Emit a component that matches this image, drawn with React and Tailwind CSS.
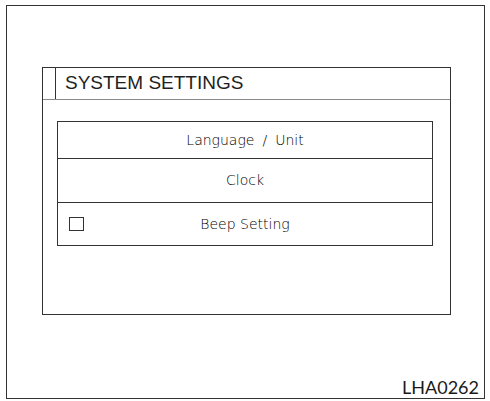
export default function App() {
  const rows = [
    { key: 'lang', h: 'h-[36px]', check: false },
    { key: 'Clock', h: 'h-[44px]', check: false },
    { key: 'Beep Setting', h: 'h-[43px]', check: true },
  ];

  return (
    <div className="w-[490px] h-[401px] bg-white pl-[6px] pt-[5px]">
      <div className="w-[479px] h-[394px] border border-[#333] flex flex-col">
        <div className="ml-[35px] mt-[61px] w-[409px] h-[248px] border border-[#333] flex flex-col">
          <div className="flex h-[32px] border-b border-[#8a8a8a]">
            <div className="w-[13px] border-r border-[#333]" />
            <div
              className="pl-[9px] flex items-center text-[19px] text-[#1f1f1f]"
              style={{ fontFamily: '"Liberation Sans", Arial, sans-serif' }}
            >
              SYSTEM SETTINGS
            </div>
          </div>

          <div
            className="ml-[14px] mt-[21px] w-[376px] border border-[#333] flex flex-col text-[14px] font-extralight text-black"
            style={{ fontFamily: '"DejaVu Sans", sans-serif' }}
          >
            {rows.map((r, i) => (
              <div
                key={r.key}
                className={`${r.h} grid grid-cols-[1fr_auto_1fr] items-center ${i > 0 ? 'border-t border-[#333]' : ''}`}
              >
                <div className="pl-[11px]">
                  {r.check && <div className="w-[15px] h-[14px] border border-[#333]" />}
                </div>
                {r.key === 'lang' ? (
                  <div className="whitespace-pre">
                    Language<span className="mx-[8px]">/</span>Unit
                  </div>
                ) : (
                  <div className="whitespace-pre">{r.key}</div>
                )}
                <div />
              </div>
            ))}
          </div>
        </div>

        <div className="flex-1 flex items-end justify-end pr-[5px]">
          <span
            className="text-[18px] leading-[22px] text-[#1a1a1a]"
            style={{ fontFamily: 'Lato, "Open Sans", sans-serif' }}
          >
            LHA0262
          </span>
        </div>
      </div>
    </div>
  );
}
